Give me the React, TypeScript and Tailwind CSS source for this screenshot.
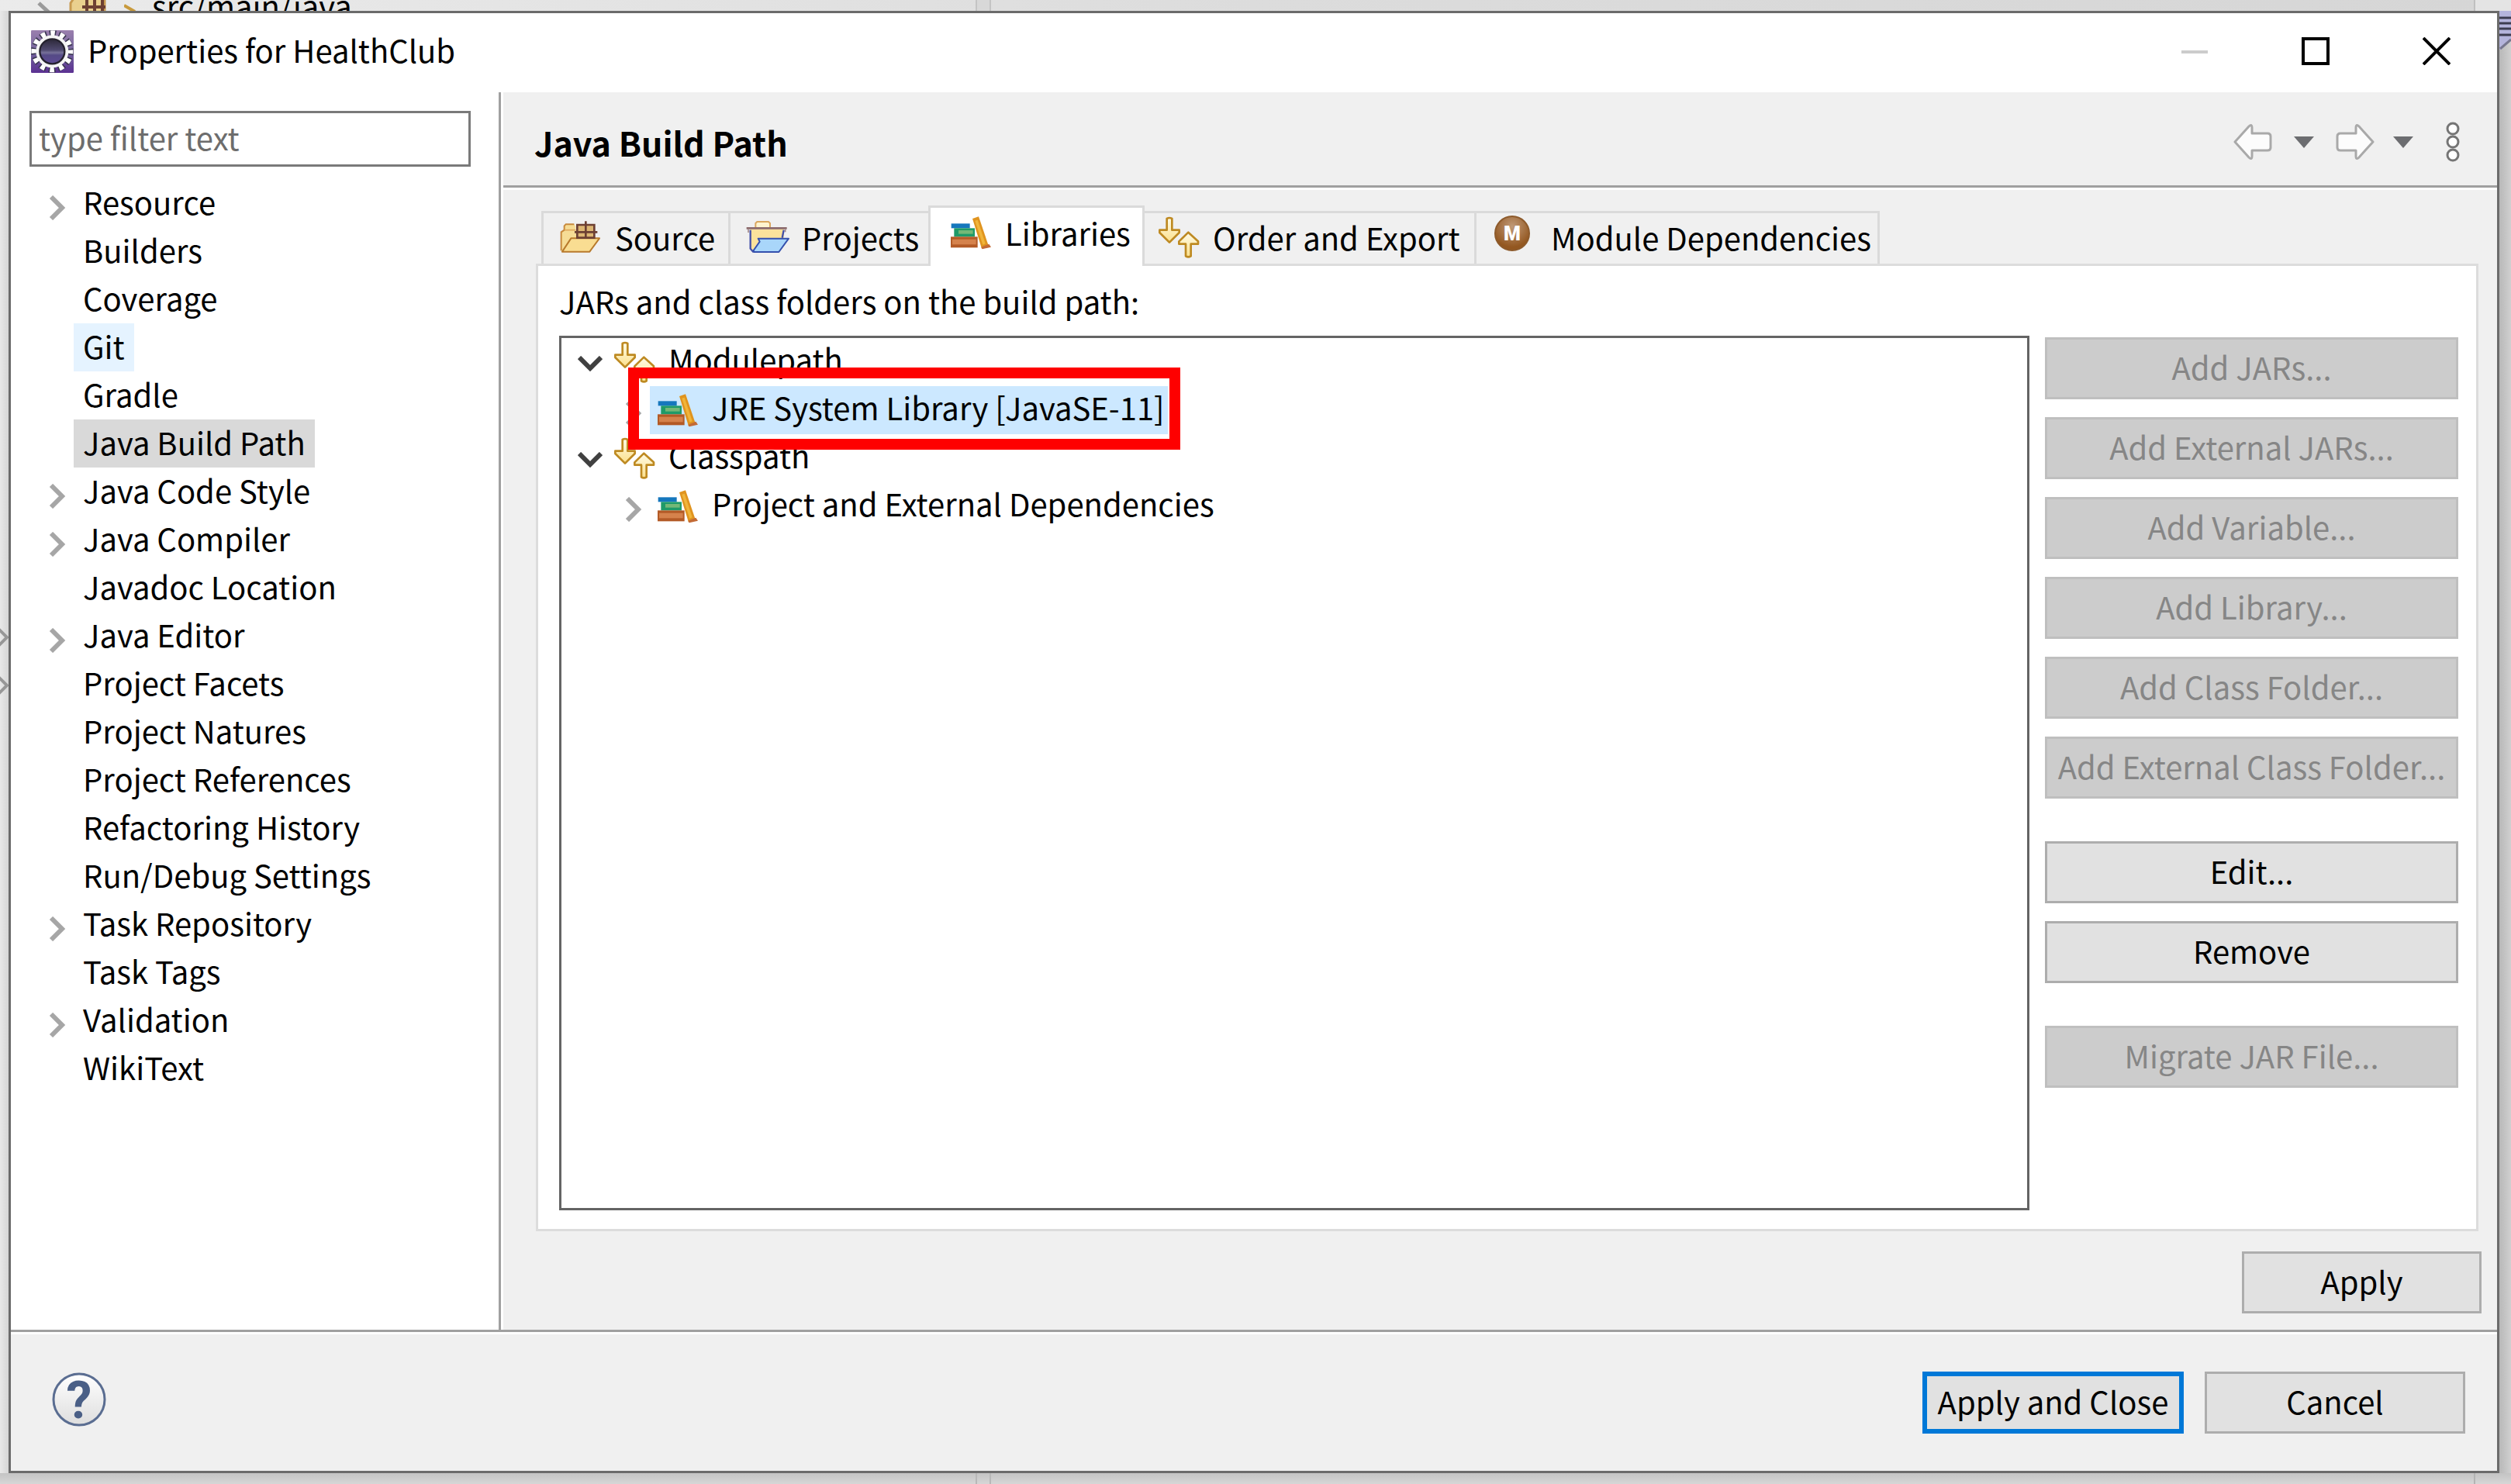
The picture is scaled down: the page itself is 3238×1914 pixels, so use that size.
import type { ReactNode } from "react";
import clsx from "clsx";

interface Page {
  name: string;
  expandable?: boolean;
  state?: "hover" | "selected";
}

const PAGES: Page[] = [
  { name: "Resource", expandable: true },
  { name: "Builders" },
  { name: "Coverage" },
  { name: "Git", state: "hover" },
  { name: "Gradle" },
  { name: "Java Build Path", state: "selected" },
  { name: "Java Code Style", expandable: true },
  { name: "Java Compiler", expandable: true },
  { name: "Javadoc Location" },
  { name: "Java Editor", expandable: true },
  { name: "Project Facets" },
  { name: "Project Natures" },
  { name: "Project References" },
  { name: "Refactoring History" },
  { name: "Run/Debug Settings" },
  { name: "Task Repository", expandable: true },
  { name: "Task Tags" },
  { name: "Validation", expandable: true },
  { name: "WikiText" },
];

const ADD_ACTIONS = [
  "Add JARs...",
  "Add External JARs...",
  "Add Variable...",
  "Add Library...",
  "Add Class Folder...",
  "Add External Class Folder...",
];

/* ---------- icons ---------- */

const EclipseIcon = () => (
  <svg className="h-[55px] w-[55px] shrink-0" viewBox="0 0 165 165" aria-hidden="true">
    <defs>
      <linearGradient id="eclipse-bg" x1="0" y1="0" x2="0" y2="1">
        <stop offset="0" stopColor="#9a7fae" />
        <stop offset="0.5" stopColor="#74659c" />
        <stop offset="1" stopColor="#5b3192" />
      </linearGradient>
      <linearGradient id="eclipse-core" x1="0" y1="0" x2="0" y2="1">
        <stop offset="0" stopColor="#2c2838" />
        <stop offset="0.45" stopColor="#504a70" />
        <stop offset="0.55" stopColor="#77729a" />
        <stop offset="0.65" stopColor="#554a86" />
        <stop offset="1" stopColor="#5d4a94" />
      </linearGradient>
    </defs>
    <rect width="165" height="165" rx="4" fill="url(#eclipse-bg)" />
    <circle cx="82" cy="82" r="71" fill="none" stroke="#39354f" strokeWidth="22" strokeDasharray="26 11.17" strokeDashoffset="13" />
    <circle cx="82" cy="82" r="71" fill="none" stroke="#fff" strokeWidth="20" strokeDasharray="17 20.17" strokeDashoffset="8.5" />
    <circle cx="82" cy="82" r="56" fill="none" stroke="#f4f4f4" strokeWidth="14" />
    <circle cx="82" cy="82" r="48" fill="url(#eclipse-core)" stroke="#25222e" strokeWidth="7" />
  </svg>
);

const SourceIcon = () => (
  <svg className="h-14 w-14 shrink-0" viewBox="60 24 168 168" aria-hidden="true">
    <path d="M68 160V88l12-8V64l6-6h32l6 8v14h64v30h26l-38 54H74z" fill="#f6dc95" />
    <path d="M68 160V88l12-8V64l6-6h32" fill="none" stroke="#c88a3c" strokeWidth="6" />
    <path d="M82 80h42" stroke="#e0a95c" strokeWidth="5" />
    <path d="M106 112h110l-38 52H72z" fill="#f9dd92" stroke="#b87a2c" strokeWidth="6" strokeLinejoin="round" />
    <rect x="130" y="60" width="66" height="50" fill="#dcb673" />
    <path d="M130 60h66v50h-66zM163 46v64M120 88h88" fill="none" stroke="#6d4033" strokeWidth="8" />
  </svg>
);

const ProjectsIcon = () => (
  <svg className="h-14 w-14 shrink-0" viewBox="95 54 168 168" aria-hidden="true">
    <path d="M132 100V84l6-6h44l6 6v16" fill="#fff4cf" stroke="#dba860" strokeWidth="6" />
    <path d="M110 106h132v40l-96 6-24 34-8 2z" fill="#fbe29c" />
    <path d="M97 103h156" stroke="#8b6a6c" strokeWidth="8" />
    <path d="M104 108v12M247 108v10" stroke="#a58b8c" strokeWidth="5" />
    <path d="M112 110v72l10 12h94M241 110l-6 30" fill="none" stroke="#4350a8" strokeWidth="7" />
    <path d="M142 143h118l-38 52h-96l-2-6 24-34z" fill="#a9d6fa" stroke="#3450ad" strokeWidth="6" strokeLinejoin="round" />
  </svg>
);

const BooksIcon = () => (
  <svg className="h-14 w-14 shrink-0" viewBox="884 38 168 168" aria-hidden="true">
    <rect x="892" y="87" width="72" height="18" fill="#1577bd" />
    <rect x="903" y="105" width="80" height="33" fill="#1f9a68" />
    <rect x="920" y="113" width="56" height="14" fill="#74b877" />
    <rect x="890" y="138" width="104" height="42" fill="#b35a26" />
    <rect x="896" y="148" width="92" height="20" fill="#d5824c" />
    <path d="M974 68l24-8 38 112-26 12z" fill="#e0941f" />
    <path d="M984 76l10-3 30 92-10 4z" fill="#f0b53a" />
    <path d="M1008 178l30-12 8 12-34 8z" fill="#c36a35" />
  </svg>
);

const OrderIcon = () => (
  <svg className="h-14 w-14 shrink-0" viewBox="38 54 168 168" aria-hidden="true">
    <defs>
      <linearGradient id="order-fill" x1="0" y1="0" x2="0" y2="1">
        <stop offset="0" stopColor="#fffbe6" />
        <stop offset="1" stopColor="#fbe08c" />
      </linearGradient>
    </defs>
    <g fill="url(#order-fill)" stroke="#be8a22" strokeWidth="8" strokeLinejoin="round">
      <path d="M76 66q10-6 20 0v44h28v10l-38 38-38-38v-10h28z" />
      <path d="M149 211q10 6 20 0v-47h28v-10l-38-35-36 35v10h26z" />
    </g>
  </svg>
);

const ModuleIcon = () => (
  <svg className="h-14 w-14 shrink-0" viewBox="0 0 56 56" aria-hidden="true">
    <defs>
      <radialGradient id="module-fill" cx="0.5" cy="0.3" r="0.6">
        <stop offset="0" stopColor="#c09a78" />
        <stop offset="1" stopColor="#935720" />
      </radialGradient>
    </defs>
    <circle cx="26" cy="23" r="22" fill="url(#module-fill)" stroke="#8d5a2b" strokeWidth="2" />
    <text x="26" y="32" textAnchor="middle" fontSize="25" fontWeight="900" fill="#fff" fontFamily="Roboto, sans-serif">
      M
    </text>
  </svg>
);

const ChevronRight = () => (
  <svg className="h-8 w-[22px]" viewBox="0 0 22 32" fill="none" stroke="#a6a6a6" strokeWidth="6" aria-hidden="true">
    <path d="M3 2l14 14L3 30" />
  </svg>
);

const ChevronDown = () => (
  <svg className="h-5 w-8" viewBox="0 0 32 20" fill="none" stroke="#404040" strokeWidth="6" aria-hidden="true">
    <path d="M2 2l14 14L30 2" />
  </svg>
);

const BackArrow = ({ flipped = false }: { flipped?: boolean }) => (
  <svg className={clsx("h-[52px] w-[50px]", flipped && "-scale-x-100")} viewBox="0 0 50 52" aria-hidden="true">
    <path
      d="M2 26L20 6q4-4 4 2v7h20q4 0 4 4v14q0 4-4 4H24v7q0 6-4 2z"
      fill="#fcfcfc"
      stroke="#a9a9a9"
      strokeWidth="3"
      strokeLinejoin="round"
    />
  </svg>
);

const Triangle = () => (
  <svg className="h-[15px] w-[26px]" viewBox="0 0 26 15" aria-hidden="true">
    <path d="M0 0h26L13 15z" fill="#6c6d70" />
  </svg>
);

/* ---------- controls ---------- */

interface PushButtonProps {
  children: ReactNode;
  disabled?: boolean;
  primary?: boolean;
  className?: string;
}

const PushButton = ({ children, disabled, primary, className }: PushButtonProps) => (
  <button
    type="button"
    disabled={disabled}
    className={clsx(
      "flex h-20 shrink-0 items-center justify-center pb-1 whitespace-nowrap",
      disabled && "border-3 border-[#bfbfbf] bg-[#cccccc] text-[#868686]",
      !disabled && !primary && "border-3 border-[#adadad] bg-[#e1e1e1]",
      primary && "border-6 border-[#0078d7] bg-[#e1e1e1]",
      className,
    )}
  >
    {children}
  </button>
);

interface TabProps {
  icon: ReactNode;
  label: string;
  className: string;
  active?: boolean;
}

const Tab = ({ icon, label, className, active }: TabProps) => (
  <button
    type="button"
    role="tab"
    aria-selected={!!active}
    className={clsx(
      "flex shrink-0 items-center border-t-3 border-[#dadada] whitespace-nowrap",
      active ? "relative z-10 -mb-[3px] h-[78px] border-x-3 bg-white pb-3" : "h-[68px] bg-[#f0f0f0] pb-1",
      className,
    )}
  >
    {icon}
    {label}
  </button>
);

interface TreeRowProps {
  icon: ReactNode;
  label: string;
  open?: boolean;
  nested?: boolean;
  selected?: boolean;
}

const TreeRow = ({ icon, label, open, nested, selected }: TreeRowProps) => (
  <div
    role="treeitem"
    aria-expanded={!!open}
    aria-selected={!!selected}
    className={clsx("flex h-[62px] items-center", nested ? "pl-[72px]" : "pl-4")}
  >
    <span className={clsx("flex w-[42px] justify-center", open ? "pt-1" : "pt-2")}>
      {open ? <ChevronDown /> : <ChevronRight />}
    </span>
    <span
      className={clsx(
        "flex h-full items-center gap-4 pr-1 pl-2 whitespace-nowrap",
        selected && "relative bg-[#cce8ff]",
      )}
    >
      {icon}
      <span className="pb-2">{label}</span>
      {selected && (
        <span className="pointer-events-none absolute -top-6 -right-4 -bottom-5 -left-7 z-10 border-14 border-[#fe0000]" />
      )}
    </span>
  </div>
);

/* ---------- workbench showing around the dialog ---------- */

const WorkbenchTop = () => (
  <div className="flex h-[14px] items-center overflow-hidden bg-linear-to-r from-[#ebebeb] via-[#dcdcdc] to-[#d6d6d6]">
    <div className="flex h-full w-[1258px] shrink-0 items-center pl-12">
      <svg className="h-[15px] w-[100px]" viewBox="0 0 100 15" aria-hidden="true">
        <path d="M2 4l14 13" stroke="#9a9a9a" strokeWidth="5" />
        <path d="M43 17V4l4-6h40v19z" fill="#ead08e" stroke="#c89a50" strokeWidth="3" />
        <path d="M58 9h30M64 0v17M74 0v17M84 0v17" stroke="#6d4033" strokeWidth="4" />
      </svg>
      <svg className="mr-5 ml-3 h-[15px] w-4" viewBox="0 0 16 15" aria-hidden="true">
        <path d="M0 7l14 8" stroke="#c89a3c" strokeWidth="4" />
      </svg>
      <span className="leading-none">src/main/java</span>
    </div>
    <div className="h-full w-5 shrink-0 border-x-2 border-[#c4c4c4] bg-[#d8d8d8]" />
    <div className="h-full flex-1" />
    <div className="h-full w-12 border-l-2 border-[#c0c0c0] bg-[#e4e4e4]" />
  </div>
);

const WorkbenchBottom = () => (
  <div className="flex h-[14px] bg-linear-to-b from-[#c4c4c4] to-[#d6d6d6]">
    <div className="w-[1258px] shrink-0" />
    <div className="w-5 shrink-0 border-x-2 border-[#b8b8b8]" />
    <div className="flex-1" />
    <div className="w-12 border-l-2 border-[#b4b4b4]" />
  </div>
);

/* ---------- dialog ---------- */

const TitleBar = () => (
  <header className="flex h-[102px] items-center bg-white pb-1 pl-[26px]">
    <EclipseIcon />
    <h1 className="flex-1 pb-1 pl-[18px]">Properties for HealthClub</h1>
    <button type="button" aria-label="Minimize" disabled className="flex h-full w-[156px] items-center justify-center">
      <svg className="h-9 w-9" viewBox="0 0 36 36" aria-hidden="true">
        <path d="M1 19h34" stroke="#cccccc" strokeWidth="4" />
      </svg>
    </button>
    <button type="button" aria-label="Maximize" className="flex h-full w-[156px] items-center justify-center">
      <svg className="h-9 w-9" viewBox="0 0 36 36" fill="none" stroke="#000" strokeWidth="4" aria-hidden="true">
        <path d="M2 2h32v32H2z" />
      </svg>
    </button>
    <button type="button" aria-label="Close" className="flex h-full w-[156px] items-center justify-center">
      <svg className="h-9 w-9" viewBox="0 0 36 36" stroke="#000" strokeWidth="4" aria-hidden="true">
        <path d="M1 1l34 34M35 1L1 35" />
      </svg>
    </button>
  </header>
);

const Sidebar = () => (
  <nav className="w-[632px] shrink-0 border-r-3 border-[#a0a0a0] bg-white pt-6 pr-9 pl-6">
    <input
      type="text"
      aria-label="Filter"
      placeholder="type filter text"
      className="block h-[72px] w-full border-3 border-[#7a7a7a] pb-1 pl-[9px] outline-none placeholder:text-[#6d6d6d]"
    />
    <ul className="mt-4 pl-[18px]">
      {PAGES.map((page) => (
        <li key={page.name} className="flex h-[62px] items-center">
          <span className="flex w-[39px] justify-center pt-3 pr-1">{page.expandable && <ChevronRight />}</span>
          <a
            href="#"
            className={clsx(
              "flex h-full items-center px-3 pb-1 whitespace-nowrap",
              page.state === "hover" && "bg-[#e5f3ff]",
              page.state === "selected" && "bg-[#d9d9d9]",
            )}
          >
            {page.name}
          </a>
        </li>
      ))}
    </ul>
  </nav>
);

const PageHeader = () => (
  <div className="flex h-[123px] shrink-0 items-center border-b-3 border-[#a0a0a0] pt-2 pr-12 pl-10">
    <h2 className="flex-1 text-[43px] font-bold">Java Build Path</h2>
    <button type="button" aria-label="Back" disabled>
      <BackArrow />
    </button>
    <button type="button" aria-label="Back history" className="ml-7">
      <Triangle />
    </button>
    <button type="button" aria-label="Forward" disabled className="ml-7">
      <BackArrow flipped />
    </button>
    <button type="button" aria-label="Forward history" className="ml-6">
      <Triangle />
    </button>
    <button type="button" aria-label="View menu" className="ml-[42px]">
      <svg className="h-[54px] w-[18px]" viewBox="0 0 18 54" fill="#fff" stroke="#757575" strokeWidth="3" aria-hidden="true">
        <circle cx="9" cy="10" r="7" />
        <circle cx="9" cy="27" r="7" />
        <circle cx="9" cy="44" r="7" />
      </svg>
    </button>
  </div>
);

const LibrariesPanel = () => (
  <section className="flex flex-1 flex-col border-3 border-[#dcdcdc] bg-white pr-[23px] pb-6 pl-[27px]">
    <p className="flex h-[90px] items-center">JARs and class folders on the build path:</p>
    <div className="flex flex-1 gap-5">
      <div role="tree" aria-label="Build path" className="flex-1 border-3 border-[#646464]">
        <TreeRow open icon={<OrderIcon />} label="Modulepath" />
        <TreeRow nested selected icon={<BooksIcon />} label="JRE System Library [JavaSE-11]" />
        <TreeRow open icon={<OrderIcon />} label="Classpath" />
        <TreeRow nested icon={<BooksIcon />} label="Project and External Dependencies" />
      </div>
      <div className="flex w-[533px] flex-col gap-[23px] pt-[2px]">
        {ADD_ACTIONS.map((action) => (
          <PushButton key={action} disabled>
            {action}
          </PushButton>
        ))}
        <PushButton className="mt-8">Edit...</PushButton>
        <PushButton>Remove</PushButton>
        <PushButton disabled className="mt-8">
          Migrate JAR File...
        </PushButton>
      </div>
    </div>
  </section>
);

export default function App() {
  return (
    <div className="flex min-h-screen flex-col bg-[#e2e2e2] font-['Noto_Sans_CJK_KR',sans-serif] text-[40px] leading-[60px] text-black">
      <WorkbenchTop />
      <div className="flex flex-1">
        <div className="w-[11px] shrink-0 bg-linear-to-r from-[#e8e8e8] to-[#d6d6d6] pt-[792px]">
          <svg className="h-[92px] w-[11px]" viewBox="0 0 11 92" fill="none" stroke="#979797" strokeWidth="4" aria-hidden="true">
            <path d="M-2 5l11 11-11 11M-2 67l11 11-11 11" />
          </svg>
        </div>

        <main className="flex flex-1 flex-col border-3 border-[#6b6b6b] bg-[#f0f0f0]">
          <TitleBar />
          <div className="flex flex-1">
            <Sidebar />
            <div className="flex flex-1 flex-col border-l-3 border-white">
              <PageHeader />
              <div className="flex flex-1 flex-col border-t-3 border-white pt-5 pr-5 pb-[21px] pl-[42px]">
                <div role="tablist" className="flex items-end pl-[7px]">
                  <Tab icon={<SourceIcon />} label="Source" className="w-[241px] gap-4 border-l-3 pl-5" />
                  <Tab icon={<ProjectsIcon />} label="Projects" className="w-[258px] gap-4 border-l-3 pl-5" />
                  <Tab icon={<BooksIcon />} label="Libraries" className="w-[279px] gap-4 pl-6" active />
                  <Tab icon={<OrderIcon />} label="Order and Export" className="w-[425px] gap-4 pl-4" />
                  <Tab icon={<ModuleIcon />} label="Module Dependencies" className="w-[523px] gap-5 border-x-3 pl-5" />
                </div>
                <div className="flex flex-1 pr-1">
                  <LibrariesPanel />
                </div>
                <div className="flex justify-end pt-[26px]">
                  <PushButton className="w-[309px]">Apply</PushButton>
                </div>
              </div>
            </div>
          </div>
          <footer className="border-t-3 border-[#a0a0a0]">
            <div className="flex h-[179px] items-center gap-[27px] border-t-3 border-white pr-[41px] pl-[52px]">
              <button type="button" aria-label="Help" className="mr-auto pb-2">
                <svg className="h-[72px] w-[72px] overflow-visible" viewBox="0 0 72 72" aria-hidden="true">
                  <defs>
                    <linearGradient id="help-fill" x1="0" y1="0" x2="0" y2="1">
                      <stop offset="0" stopColor="#ffffff" />
                      <stop offset="1" stopColor="#dedede" />
                    </linearGradient>
                  </defs>
                  <circle cx="36" cy="36" r="33" fill="url(#help-fill)" stroke="#5a6d91" strokeWidth="3" />
                  <text x="36" y="60" textAnchor="middle" fontSize="66" fontWeight="700" fill="#4a5f86" fontFamily="Roboto, sans-serif">
                    ?
                  </text>
                </svg>
              </button>
              <PushButton primary className="w-[337px]">
                Apply and Close
              </PushButton>
              <PushButton className="w-[336px]">Cancel</PushButton>
            </div>
          </footer>
        </main>

        <div className="w-[15px] shrink-0 bg-linear-to-r from-[#b8b8b8] to-[#d0d0d0]">
          <svg className="h-[50px] w-[15px]" viewBox="0 0 15 50" aria-hidden="true">
            <path d="M0 0h15v38L2 50H0z" fill="#b4b4dc" />
            <path d="M0 9h15M0 16h15M0 23h15M0 31h15" stroke="#3c3c50" strokeWidth="3" />
            <path d="M1 49l14-12" stroke="#77778f" strokeWidth="3" />
          </svg>
        </div>
      </div>
      <WorkbenchBottom />
    </div>
  );
}
